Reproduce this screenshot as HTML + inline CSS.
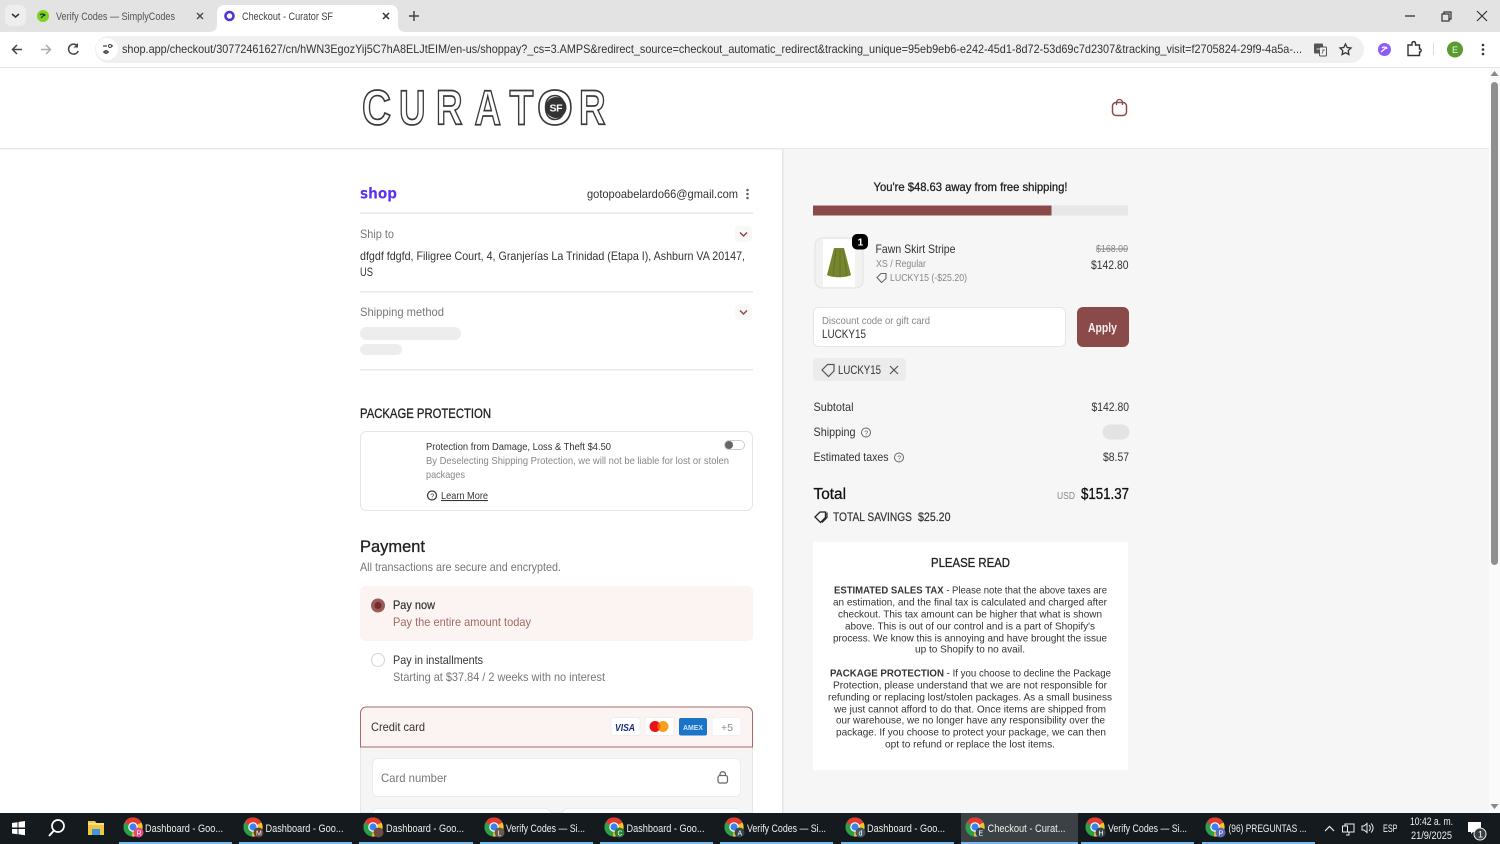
<!DOCTYPE html>
<html><head><meta charset="utf-8"><title>Checkout - Curator SF</title>
<style>
html,body{margin:0;padding:0;width:1500px;height:844px;overflow:hidden;background:#fff}
svg{display:block;font-family:"Liberation Sans",sans-serif}
.m{font-size:12px;fill:#333}
.g{font-size:12px;fill:#777}
.p{font-size:10.5px;fill:#333}
.t{font-size:11px;fill:#eee}
.logo{font-size:49px;font-weight:bold;fill:#fff;stroke:#3a3a3a;stroke-width:1.7}
</style></head><body>
<svg width="1500" height="844" viewBox="0 0 1500 844" xmlns="http://www.w3.org/2000/svg">
<defs>
<g id="chrome">
<circle r="9.500" fill="#4285f4"/>
<path d="M0 0L-8.400 -4.500A9.500 9.500 0 0 1 8.400 -4.500Z" fill="#e33b2e"/>
<path d="M0 0L-8.400 -4.500A9.500 9.500 0 0 0 -1 9.500Z" fill="#2c9f47"/>
<path d="M0 0L8.400 -4.500A9.500 9.500 0 0 1 -1 9.500Z" fill="#f7c325"/>
<circle r="4.800" fill="#fff"/><circle r="3.600" fill="#3b82ee"/>
</g>
</defs>

<!-- Browser chrome -->
<rect width="1500" height="32" fill="#e3e3e3"/>
<rect x="5" y="5" width="21" height="21" rx="6" fill="#eeeeee"/>
<path d="M12 14l3.500 3 3.500-3" fill="none" stroke="#333" stroke-width="1.600"/>
<circle cx="43" cy="16" r="6" fill="#7ed321"/><path d="M41 18l4-4M40 15a3 3 0 0 1 5 1" stroke="#234" stroke-width="1.200" fill="none"/>
<text x="56" y="20" font-size="11" fill="#555" textLength="119" lengthAdjust="spacingAndGlyphs">Verify Codes — SimplyCodes</text>
<path d="M197 13l6 6M203 13l-6 6" stroke="#444" stroke-width="1.300"/>
<path d="M209 32c6 0 8-3 8-8V13c0-5 3-8 8-8h165c5 0 8 3 8 8v11c0 5 2 8 8 8z" fill="#fff"/>
<circle cx="229.500" cy="16" r="4" fill="none" stroke="#5433d6" stroke-width="2.600"/>
<text x="242" y="20" font-size="11" fill="#444" textLength="91" lengthAdjust="spacingAndGlyphs">Checkout - Curator SF</text>
<path d="M383 13l6 6M389 13l-6 6" stroke="#333" stroke-width="1.500"/>
<path d="M414 11v10M409 16h10" stroke="#444" stroke-width="1.500"/>
<path d="M1405 16h10" stroke="#333" stroke-width="1.300"/>
<rect x="1442" y="14" width="7" height="7" fill="none" stroke="#333" stroke-width="1.200"/><path d="M1444 14v-2h7v7h-2" fill="none" stroke="#333" stroke-width="1.200"/>
<path d="M1477 11l10 10M1487 11l-10 10" stroke="#333" stroke-width="1.200"/>

<path d="M0 40c0-5 3-8 8-8h1484c5 0 8 3 8 8v27H0z" fill="#fff"/>
<rect y="67" width="1500" height="1" fill="#e2e2e2"/>
<rect x="95" y="36" width="1269" height="27" rx="13.500" fill="#f0f0f0"/>
<circle cx="107" cy="49" r="11" fill="#fff"/>
<path d="M103 46h4M103 52h6M111 46h2M113 52h0" stroke="#444" stroke-width="1.300" fill="none"/><circle cx="110" cy="46" r="1.500" fill="none" stroke="#444"/><circle cx="106" cy="52" r="1.500" fill="none" stroke="#444"/>
<path d="M22 49.500H13M17 45l-4.500 4.500 4.500 4.500" fill="none" stroke="#444" stroke-width="1.500"/>
<path d="M41 49.500h9M46 45l4.500 4.500-4.500 4.500" fill="none" stroke="#aaa" stroke-width="1.500"/>
<path d="M77.500 46a5 5 0 1 0 .7 5" fill="none" stroke="#444" stroke-width="1.500"/><path d="M78 43v4.500h-4.500z" fill="#444"/>
<text x="122" y="53" font-size="12" fill="#333" textLength="1180" lengthAdjust="spacingAndGlyphs">shop.app/checkout/30772461627/cn/hWN3EgozYij5C7hA8ELJtEIM/en-us/shoppay?_cs=3.AMPS&amp;redirect_source=checkout_automatic_redirect&amp;tracking_unique=95eb9eb6-e242-45d1-8d72-53d69c7d2307&amp;tracking_visit=f2705824-29f9-4a5a-...</text>
<rect x="1314" y="43.500" width="9" height="10" rx="1" fill="#555"/><rect x="1319.500" y="47" width="7" height="9" rx="1" fill="#f0f0f0" stroke="#555"/><path d="M1316.500 49h4M1322 50h3M1323 50l-1 3" stroke="#fff" stroke-width=".8" fill="none"/><path d="M1322 50h3M1323.500 50l-1.500 3.500" stroke="#555" stroke-width=".8" fill="none"/>
<path d="M1345.500 44l1.700 3.500 3.800.5-2.800 2.700.7 3.800-3.400-1.800-3.400 1.800.7-3.800-2.800-2.700 3.800-.5z" fill="none" stroke="#333" stroke-width="1.300"/>
<circle cx="1384.500" cy="49.500" r="6.500" fill="#8b5cf6"/><path d="M1381 52l6-5M1382 48a3 3 0 0 1 5 1" stroke="#fff" stroke-width="1.200" fill="none"/>
<path d="M1408 45h4v-2a1.800 1.800 0 0 1 3.500 0v2h4v4h1a2 2 0 0 1 0 3h-1v3.500h-11.500z" fill="none" stroke="#333" stroke-width="1.400"/>
<rect x="1433" y="43" width="1" height="12" fill="#ddd"/>
<circle cx="1455" cy="49.500" r="8" fill="#5b9a2f"/><text x="1452" y="53" font-size="9" fill="#dfe">E</text>
<circle cx="1483" cy="45" r="1.300" fill="#333"/><circle cx="1483" cy="49.500" r="1.300" fill="#333"/><circle cx="1483" cy="54" r="1.300" fill="#333"/>

<!-- Page backgrounds -->
<rect x="0" y="68" width="1489" height="745" fill="#fff"/>
<rect x="0" y="148" width="1489" height="1.500" fill="#e8e8e8"/>
<rect x="783" y="149" width="706" height="664" fill="#f6f6f6"/>
<rect x="782" y="149" width="1.500" height="664" fill="#e6e6e6"/>

<!-- Scrollbar -->
<rect x="1489" y="68" width="11" height="745" fill="#fafafa"/>
<rect x="1491" y="82" width="7" height="483" rx="3.500" fill="#8f8f8f"/>
<path d="M1494.500 71l4 5h-8z" fill="#888"/><path d="M1494.500 809l4-5h-8z" fill="#888"/>

<!-- Logo (real text, outlined) -->
<g class="logo">
<text transform="translate(362,124.500) scale(.82,1)">C</text>
<text transform="translate(399,124.500) scale(.75,1)">U</text>
<text transform="translate(436,124.500) scale(.75,1)">R</text>
<text transform="translate(474.500,124.500) scale(.75,1)">A</text>
<text transform="translate(509.500,124.500) scale(.8,1)">T</text>
<text transform="translate(537,124.500) scale(.94,1)">O</text>
<text transform="translate(579,124.500) scale(.75,1)">R</text>
</g>
<circle cx="556" cy="107.500" r="10.500" fill="#333"/>
<text x="549.500" y="111.500" font-size="10.500" fill="#fff" font-weight="bold" textLength="13">SF</text>

<!-- Bag icon -->
<rect x="1112.500" y="102.500" width="14" height="13" rx="3.500" fill="none" stroke="#8b4a4a" stroke-width="1.500"/>
<path d="M1116.500 105v-2.500a3 3 0 0 1 6 0v2.500" fill="none" stroke="#8b4a4a" stroke-width="1.300"/>

<!-- Shop header -->
<text x="360" y="198.500" font-size="15.500" font-weight="bold" fill="#5a31f4" style="font-family:'DejaVu Sans',sans-serif" textLength="37" lengthAdjust="spacingAndGlyphs">shop</text>
<text x="587" y="198" class="m" textLength="151" lengthAdjust="spacingAndGlyphs">gotopoabelardo66@gmail.com</text>
<circle cx="747.500" cy="190" r="1.300" fill="#666"/><circle cx="747.500" cy="194" r="1.300" fill="#666"/><circle cx="747.500" cy="198" r="1.300" fill="#666"/>
<rect x="360" y="212.500" width="393" height="1.500" fill="#e8e8e8"/>

<!-- Ship to -->
<text x="360" y="238" class="g" textLength="34" lengthAdjust="spacingAndGlyphs">Ship to</text>
<rect x="735" y="226" width="17" height="16" rx="4" fill="#f8f8f8"/>
<path d="M740 232.500l3.500 3.500 3.500-3.500" fill="none" stroke="#8b4a4a" stroke-width="1.500"/>
<text x="360" y="260" class="m" textLength="385" lengthAdjust="spacingAndGlyphs">dfgdf fdgfd, Filigree Court, 4, Granjerías La Trinidad (Etapa I), Ashburn VA 20147,</text>
<text x="360" y="276" class="m" textLength="13" lengthAdjust="spacingAndGlyphs">US</text>
<rect x="360" y="291" width="393" height="1.500" fill="#e8e8e8"/>

<!-- Shipping method -->
<text x="360" y="316" class="g" textLength="84" lengthAdjust="spacingAndGlyphs">Shipping method</text>
<rect x="735" y="304" width="17" height="16" rx="4" fill="#f8f8f8"/>
<path d="M740 310.500l3.500 3.500 3.500-3.500" fill="none" stroke="#8b4a4a" stroke-width="1.500"/>
<rect x="360" y="327" width="101" height="13" rx="6.500" fill="#ededed"/>
<rect x="360" y="344" width="42" height="11" rx="5.500" fill="#ededed"/>
<rect x="360" y="369" width="393" height="1.500" fill="#e8e8e8"/>

<!-- Package protection -->
<text x="360" y="418" font-size="13.500" fill="#222" textLength="131" lengthAdjust="spacingAndGlyphs" stroke="#222" stroke-width=".3">PACKAGE PROTECTION</text>
<rect x="360.500" y="431.500" width="392" height="79" rx="6" fill="#fff" stroke="#e5e5e5"/>
<text x="426" y="450" font-size="10.500" fill="#333" textLength="185" lengthAdjust="spacingAndGlyphs">Protection from Damage, Loss &amp; Theft $4.50</text>
<text x="426" y="464" font-size="10.500" fill="#888" textLength="303" lengthAdjust="spacingAndGlyphs">By Deselecting Shipping Protection, we will not be liable for lost or stolen</text>
<text x="426" y="478" font-size="10.500" fill="#888" textLength="39" lengthAdjust="spacingAndGlyphs">packages</text>
<circle cx="432" cy="495.500" r="4.500" fill="none" stroke="#333" stroke-width="1.200"/><text x="430.300" y="498.500" font-size="7" fill="#333">?</text>
<text x="441" y="499" font-size="10.500" fill="#333" text-decoration="underline" textLength="47" lengthAdjust="spacingAndGlyphs">Learn More</text>
<rect x="724.500" y="440.500" width="20" height="9" rx="4.500" fill="#fff" stroke="#ccc"/>
<circle cx="729" cy="445" r="4" fill="#666"/>

<!-- Payment -->
<text x="360" y="552" font-size="17" fill="#222" textLength="65" lengthAdjust="spacingAndGlyphs" stroke="#222" stroke-width=".3">Payment</text>
<text x="360" y="571" class="g" textLength="201" lengthAdjust="spacingAndGlyphs">All transactions are secure and encrypted.</text>
<rect x="360" y="586" width="393" height="55" rx="5" fill="#fbf4f3"/>
<circle cx="378" cy="605.500" r="7" fill="#9a5a58"/><circle cx="378" cy="605.500" r="3.500" fill="#6e2f2e"/>
<text x="393" y="609" class="m" textLength="42" lengthAdjust="spacingAndGlyphs" stroke="#333" stroke-width=".2">Pay now</text>
<text x="393" y="626" font-size="12" fill="#a06a60" textLength="138" lengthAdjust="spacingAndGlyphs">Pay the entire amount today</text>
<circle cx="378" cy="660" r="6.500" fill="#fff" stroke="#d5d5d5"/>
<text x="393" y="664" class="m" textLength="90" lengthAdjust="spacingAndGlyphs">Pay in installments</text>
<text x="393" y="681" class="g" textLength="212" lengthAdjust="spacingAndGlyphs">Starting at $37.84 / 2 weeks with no interest</text>

<!-- Credit card -->
<rect x="360.500" y="747" width="392" height="66" fill="#f5f5f5" stroke="#e5e5e5"/>
<path d="M360.500 747v-34c0-3 2-6 6-6h380c4 0 6 3 6 6v34z" fill="#fbf4f3" stroke="#a56a68"/>
<text x="371" y="731" class="m" textLength="54" lengthAdjust="spacingAndGlyphs">Credit card</text>
<rect x="611" y="717.500" width="29" height="18" rx="2" fill="#fff" stroke="#eee"/>
<text x="615" y="731" font-size="10.500" font-weight="bold" font-style="italic" fill="#1a2a7a" textLength="20" lengthAdjust="spacingAndGlyphs">VISA</text>
<rect x="645" y="717.500" width="29" height="18" rx="2" fill="#fff" stroke="#eee"/>
<circle cx="655" cy="726.500" r="5.500" fill="#e8141c"/><circle cx="663" cy="726.500" r="5.500" fill="#f79e1b"/><path d="M659 722.700a5.500 5.500 0 0 1 0 7.600a5.500 5.500 0 0 1 0-7.600z" fill="#ff5f00"/>
<rect x="679" y="718" width="28" height="17.500" rx="2" fill="#1a75c9"/>
<text x="683" y="730" font-size="7.500" font-weight="bold" fill="#cfe4f8" textLength="20" lengthAdjust="spacingAndGlyphs">AMEX</text>
<rect x="712" y="717.500" width="29" height="18" rx="2" fill="#fff" stroke="#f1f1f1"/>
<text x="721" y="731" font-size="10.500" fill="#888">+5</text>
<rect x="372.500" y="758.500" width="368" height="38" rx="5" fill="#fff" stroke="#ececec"/>
<text x="381" y="782" class="g" textLength="66" lengthAdjust="spacingAndGlyphs">Card number</text>
<rect x="718" y="775.500" width="9.500" height="7.500" rx="2" fill="none" stroke="#666" stroke-width="1.200"/><path d="M720 775.500v-1.500a2.800 2.800 0 0 1 5.500 0v1.500" fill="none" stroke="#666" stroke-width="1.200"/>
<rect x="372.500" y="808.500" width="178" height="20" rx="5" fill="#fff" stroke="#ececec"/>
<rect x="562.500" y="808.500" width="178" height="20" rx="5" fill="#fff" stroke="#ececec"/>

<!-- Right column -->
<text x="873.500" y="191" font-size="12" fill="#222" stroke="#222" stroke-width=".3" textLength="194" lengthAdjust="spacingAndGlyphs">You're $48.63 away from free shipping!</text>
<rect x="813" y="205.500" width="315" height="10" fill="#e7e7e7"/>
<rect x="813" y="205.500" width="238.500" height="10" fill="#8b4a4a"/>

<rect x="815" y="238" width="48" height="50" rx="7" fill="#f2f2f2" stroke="#e3e3e3"/>
<rect x="823" y="239" width="32" height="48" fill="#fff"/>
<path d="M834 248h10l7 27c-5 3-19 3-24 0z" fill="#76862f"/>
<path d="M836 250l-3 26M840 250v27M843 250l4 26" stroke="#5f6f24" stroke-width=".8" fill="none"/>
<rect x="852" y="234" width="16" height="15.500" rx="5" fill="#000"/>
<text x="857.500" y="245.500" font-size="10.500" font-weight="bold" fill="#fff">1</text>
<text x="875.500" y="253" class="m" textLength="80" lengthAdjust="spacingAndGlyphs">Fawn Skirt Stripe</text>
<text x="876" y="267" font-size="10.500" fill="#888" textLength="50" lengthAdjust="spacingAndGlyphs">XS / Regular</text>
<path d="M877 277.500l4-4h5v5l-4.500 4z" fill="none" stroke="#666" stroke-width="1.100"/>
<text x="890" y="281" font-size="10.500" fill="#888" textLength="77" lengthAdjust="spacingAndGlyphs">LUCKY15 (-$25.20)</text>
<text x="1096" y="252" font-size="10.500" fill="#888" text-decoration="line-through" textLength="32" lengthAdjust="spacingAndGlyphs">$168.00</text>
<text x="1091" y="269" class="m" textLength="37.500" lengthAdjust="spacingAndGlyphs">$142.80</text>

<rect x="813.500" y="307.500" width="252" height="39" rx="5" fill="#fff" stroke="#e6e6e6"/>
<text x="822" y="324" font-size="10.500" fill="#888" textLength="108" lengthAdjust="spacingAndGlyphs">Discount code or gift card</text>
<text x="822" y="338" class="m" textLength="44" lengthAdjust="spacingAndGlyphs">LUCKY15</text>
<rect x="1077" y="307" width="52" height="40" rx="6" fill="#8b4a4a"/>
<text x="1088" y="332" font-size="12.500" font-weight="bold" fill="#f7eeee" textLength="29" lengthAdjust="spacingAndGlyphs">Apply</text>

<rect x="813" y="358" width="93" height="23" rx="4" fill="#ececec"/>
<path d="M822 370l5.500-5.500h6.500v6.500l-5.500 5.500z" fill="none" stroke="#555" stroke-width="1.200"/>
<text x="838" y="374" class="m" textLength="43" lengthAdjust="spacingAndGlyphs">LUCKY15</text>
<path d="M890 366l8 8M898 366l-8 8" stroke="#555" stroke-width="1.200"/>

<text x="813.500" y="411" class="m" textLength="40" lengthAdjust="spacingAndGlyphs">Subtotal</text>
<text x="1091.500" y="411" class="m" textLength="37.500" lengthAdjust="spacingAndGlyphs">$142.80</text>
<text x="813.500" y="436" class="m" textLength="42" lengthAdjust="spacingAndGlyphs">Shipping</text>
<circle cx="866" cy="432.500" r="4.500" fill="none" stroke="#666"/><text x="864.300" y="435.500" font-size="7" fill="#666">?</text>
<rect x="1102.500" y="424.500" width="27" height="15" rx="7.500" fill="#e3e3e3"/>
<text x="813.500" y="461" class="m" textLength="75" lengthAdjust="spacingAndGlyphs">Estimated taxes</text>
<circle cx="899" cy="457.500" r="4.500" fill="none" stroke="#666"/><text x="897.300" y="460.500" font-size="7" fill="#666">?</text>
<text x="1103" y="461" class="m" textLength="26" lengthAdjust="spacingAndGlyphs">$8.57</text>

<text x="813.500" y="499" font-size="15.500" fill="#111" stroke="#111" stroke-width=".3" textLength="32.500" lengthAdjust="spacingAndGlyphs">Total</text>
<text x="1057" y="499" font-size="10.500" fill="#888" textLength="18" lengthAdjust="spacingAndGlyphs">USD</text>
<text x="1081" y="499" font-size="15.500" fill="#111" stroke="#111" stroke-width=".3" textLength="48" lengthAdjust="spacingAndGlyphs">$151.37</text>
<path d="M815 517l5-5h5.500v5.500l-5 5z" fill="none" stroke="#222" stroke-width="1.300"/><path d="M827 512.500v5l-5 5" fill="none" stroke="#222" stroke-width="1.200"/>
<text x="833" y="521" class="m" stroke="#333" stroke-width=".2" textLength="79" lengthAdjust="spacingAndGlyphs">TOTAL SAVINGS</text>
<text x="918" y="521" class="m" stroke="#333" stroke-width=".2" textLength="32.500" lengthAdjust="spacingAndGlyphs">$25.20</text>

<!-- Please read -->
<rect x="813" y="542" width="315" height="228" fill="#fff"/>
<text x="931" y="567" font-size="12.500" fill="#222" stroke="#222" stroke-width=".3" textLength="79" lengthAdjust="spacingAndGlyphs">PLEASE READ</text>
<g class="p">
<text x="834" y="593.500" textLength="273" lengthAdjust="spacingAndGlyphs"><tspan font-weight="bold">ESTIMATED SALES TAX</tspan> - Please note that the above taxes are</text>
<text x="833" y="605.500" textLength="274" lengthAdjust="spacingAndGlyphs">an estimation, and the final tax is calculated and charged after</text>
<text x="838" y="617.500" textLength="264" lengthAdjust="spacingAndGlyphs">checkout. This tax amount can be higher that what is shown</text>
<text x="845" y="629.500" textLength="250" lengthAdjust="spacingAndGlyphs">above. This is out of our control and is a part of Shopify's</text>
<text x="833" y="641.500" textLength="274" lengthAdjust="spacingAndGlyphs">process. We know this is annoying and have brought the issue</text>
<text x="915" y="652.500" textLength="110" lengthAdjust="spacingAndGlyphs">up to Shopify to no avail.</text>
<text x="830" y="676.500" textLength="281" lengthAdjust="spacingAndGlyphs"><tspan font-weight="bold">PACKAGE PROTECTION</tspan> - If you choose to decline the Package</text>
<text x="833" y="688.500" textLength="274" lengthAdjust="spacingAndGlyphs">Protection, please understand that we are not responsible for</text>
<text x="828" y="700.500" textLength="284" lengthAdjust="spacingAndGlyphs">refunding or replacing lost/stolen packages. As a small business</text>
<text x="834" y="712.500" textLength="272" lengthAdjust="spacingAndGlyphs">we just cannot afford to do that. Once items are shipped from</text>
<text x="836" y="723.500" textLength="269" lengthAdjust="spacingAndGlyphs">our warehouse, we no longer have any responsibility over the</text>
<text x="836" y="735.500" textLength="270" lengthAdjust="spacingAndGlyphs">package. If you choose to protect your package, we can then</text>
<text x="885" y="747.500" textLength="170" lengthAdjust="spacingAndGlyphs">opt to refund or replace the lost items.</text>
</g>

<!-- Taskbar -->
<rect y="813" width="1500" height="31" fill="#141a1d"/>
<rect x="961" y="813" width="117" height="31" fill="#3b4144"/>
<g fill="#76b9ed">
<rect x="119" y="842" width="113" height="2"/><rect x="239" y="842" width="113" height="2"/><rect x="359" y="842" width="114" height="2"/><rect x="480" y="842" width="113" height="2"/><rect x="600" y="842" width="113" height="2"/><rect x="720" y="842" width="113" height="2"/><rect x="841" y="842" width="113" height="2"/><rect x="961" y="842" width="117" height="2"/><rect x="1081" y="842" width="113" height="2"/><rect x="1202" y="842" width="113" height="2"/>
</g>
<path d="M12 823l5.500-.8v5.300H12zM18.500 822l6.500-1v6.500h-6.500zM12 829h5.500v5.200L12 833.500zM18.500 829H25v6.200l-6.500-1z" fill="#fff"/>
<circle cx="58" cy="826" r="6" fill="none" stroke="#fff" stroke-width="1.700"/><path d="M53.500 831l-4.500 5" stroke="#fff" stroke-width="1.900"/>
<path d="M88 821h7l1.500 2H104v12H88z" fill="#f4c542"/><rect x="92" y="829" width="8" height="6" fill="#3d9ad6"/><rect x="88" y="823" width="16" height="2" fill="#f9e08a"/>

<use href="#chrome" x="133" y="827"/><circle cx="138.500" cy="832.500" r="5" fill="#e84a7f"/><text x="136.500" y="835.500" font-size="7" fill="#fff">R</text>
<text x="145" y="832" class="t" textLength="78" lengthAdjust="spacingAndGlyphs">Dashboard - Goo...</text>
<use href="#chrome" x="253" y="827"/><circle cx="258.500" cy="832.500" r="5" fill="#5d4037"/><text x="256" y="835.500" font-size="7" fill="#fff">M</text>
<text x="265.500" y="832" class="t" textLength="78" lengthAdjust="spacingAndGlyphs">Dashboard - Goo...</text>
<use href="#chrome" x="373" y="827"/><circle cx="378.500" cy="832.500" r="5" fill="#6d4c41"/>
<text x="386" y="832" class="t" textLength="78" lengthAdjust="spacingAndGlyphs">Dashboard - Goo...</text>
<use href="#chrome" x="494" y="827"/><circle cx="499.500" cy="832.500" r="5" fill="#6d5a4e"/><text x="497.500" y="835.500" font-size="7" fill="#fff">L</text>
<text x="506" y="832" class="t" textLength="79" lengthAdjust="spacingAndGlyphs">Verify Codes — Si...</text>
<use href="#chrome" x="614" y="827"/><circle cx="619.500" cy="832.500" r="5" fill="#2e7d32"/><text x="617.500" y="835.500" font-size="7" fill="#fff">C</text>
<text x="626.500" y="832" class="t" textLength="78" lengthAdjust="spacingAndGlyphs">Dashboard - Goo...</text>
<use href="#chrome" x="734" y="827"/><circle cx="739.500" cy="832.500" r="5" fill="#37474f"/><text x="737.500" y="835.500" font-size="7" fill="#fff">A</text>
<text x="747" y="832" class="t" textLength="79" lengthAdjust="spacingAndGlyphs">Verify Codes — Si...</text>
<use href="#chrome" x="855" y="827"/><circle cx="860.500" cy="832.500" r="5" fill="#455a64"/><text x="858.500" y="835.500" font-size="7" fill="#fff">d</text>
<text x="867" y="832" class="t" textLength="78" lengthAdjust="spacingAndGlyphs">Dashboard - Goo...</text>
<use href="#chrome" x="975" y="827"/><circle cx="980.500" cy="832.500" r="5" fill="#37474f"/><text x="978.500" y="835.500" font-size="7" fill="#fff">E</text>
<text x="987.500" y="832" class="t" textLength="78" lengthAdjust="spacingAndGlyphs">Checkout - Curat...</text>
<use href="#chrome" x="1095" y="827"/><circle cx="1100.500" cy="832.500" r="5" fill="#37474f"/><text x="1098.500" y="835.500" font-size="7" fill="#fff">H</text>
<text x="1108" y="832" class="t" textLength="79" lengthAdjust="spacingAndGlyphs">Verify Codes — Si...</text>
<use href="#chrome" x="1215" y="827"/><circle cx="1220.500" cy="832.500" r="5" fill="#5c6bc0"/><text x="1218.500" y="835.500" font-size="7" fill="#fff">P</text>
<text x="1228.500" y="832" class="t" textLength="78" lengthAdjust="spacingAndGlyphs">(96) PREGUNTAS ...</text>

<path d="M1325 831l4.500-4.500 4.500 4.500" fill="none" stroke="#eee" stroke-width="1.200"/>
<rect x="1345" y="824" width="9" height="8" fill="none" stroke="#eee"/><rect x="1342.500" y="826" width="5" height="6" fill="#141a1d" stroke="#eee"/><path d="M1349 832v3h-3" stroke="#eee" fill="none"/>
<path d="M1362 826h2l3-2.500v9l-3-2.500h-2zM1369 825a4 4 0 0 1 0 6M1371 823.500a6 6 0 0 1 0 9" fill="none" stroke="#eee"/>
<text x="1383" y="832" class="t" textLength="14.500" lengthAdjust="spacingAndGlyphs">ESP</text>
<text x="1410" y="825" class="t" textLength="43" lengthAdjust="spacingAndGlyphs">10:42 a. m.</text>
<text x="1411" y="839" class="t" textLength="41" lengthAdjust="spacingAndGlyphs">21/9/2025</text>
<path d="M1468 822h13v10h-8l-2 2v-2h-3z" fill="#fff"/>
<circle cx="1480" cy="834" r="6" fill="#3a3f42" stroke="#eee"/><text x="1478" y="837.500" font-size="9" fill="#fff">1</text>
</svg>
</body></html>
